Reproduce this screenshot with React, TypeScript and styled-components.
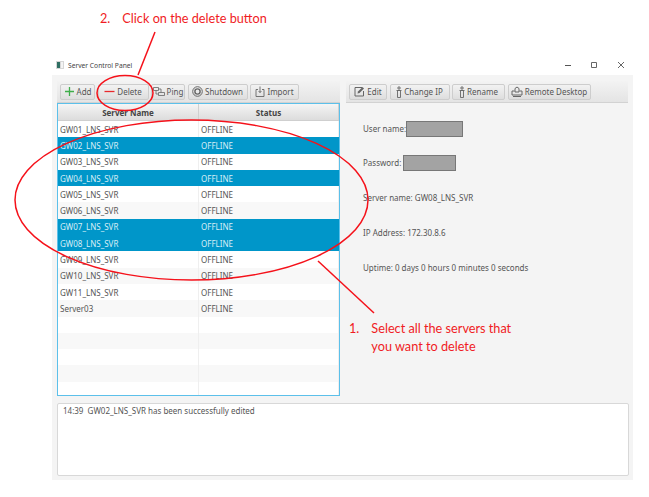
import * as React from 'react';
import styled, { createGlobalStyle } from 'styled-components';

const GlobalStyle = createGlobalStyle`
  html, body {
    margin: 0;
    padding: 0;
    background: #fff;
  }
`;

const Page = styled.div`
  position: relative;
  width: 649px;
  height: 497px;
  overflow: hidden;
  padding: 55px 0 0 52px;
  box-sizing: border-box;
  background: #fff;
  font-family: "Noto Sans", "Open Sans", sans-serif;
  font-size: 8px;
  color: #555;
`;

const Window = styled.div`
  width: 581px;
  height: 425px;
  display: flex;
  flex-direction: column;
`;

const TitleBar = styled.div`
  height: 20px;
  display: flex;
  align-items: center;
  padding: 0 0 0 4px;
  background: #fff;
  color: #444;
  font-size: 6.7px;
`;

const TitleText = styled.span`
  margin-left: 4px;
  flex: 1;
`;

const WindowButton = styled.div`
  width: 26.5px;
  height: 20px;
  display: flex;
  align-items: center;
  justify-content: center;
  position: relative;
  left: 1px;
`;

const Body = styled.div`
  flex: 1;
  display: flex;
  flex-direction: column;
  background: #f4f4f4;
  padding: 6px 4px 4px 5px;
`;

const Panes = styled.div`
  display: flex;
  gap: 6px;
`;

const LeftPane = styled.div`
  width: 283px;
  display: flex;
  flex-direction: column;
`;

const RightPane = styled.div`
  width: 282px;
  display: flex;
  flex-direction: column;
`;

const Toolbar = styled.div`
  height: 22px;
  display: flex;
  align-items: center;
  gap: 2.5px;
  padding-left: 3px;
  box-sizing: border-box;
  background: linear-gradient(#f3f3f3, #e4e4e4);
  border-bottom: 1px solid #d2d2d2;
`;

const ToolButton = styled.div<{ $width: number }>`
  width: ${({ $width }) => $width}px;
  height: 16px;
  display: flex;
  align-items: center;
  justify-content: center;
  gap: 2px;
  box-sizing: border-box;
  border: 1px solid #cdcdcd;
  border-radius: 2px;
  background: linear-gradient(#f2f2f2, #dedede);
  color: #555;
  white-space: nowrap;
`;

const Table = styled.div`
  height: 293px;
  box-sizing: border-box;
  border: 1px solid #5cc0ea;
  background: #fff;
  overflow: hidden;
`;

const HeaderRow = styled.div`
  height: 17px;
  display: grid;
  grid-template-columns: 141px 1fr;
  background: linear-gradient(#f5f5f5, #dcdcdc);
  border-bottom: 1px solid #cfcfcf;
  box-sizing: border-box;
`;

const HeaderCell = styled.div`
  display: flex;
  align-items: center;
  justify-content: center;
  font-weight: 700;
  color: #444;
  border-right: 1px solid #d0d0d0;
`;

const Row = styled.div<{ $selected: boolean; $odd: boolean }>`
  height: 16.3px;
  display: grid;
  grid-template-columns: 141px 1fr;
  background: ${({ $selected, $odd }) => ($selected ? '#0096c9' : $odd ? '#fff' : '#f8f8f8')};
  color: ${({ $selected }) => ($selected ? '#d8eef6' : '#555')};
`;

const Cell = styled.div<{ $selected: boolean }>`
  display: flex;
  align-items: center;
  padding-left: 2px;
  border-right: 1px solid ${({ $selected }) => ($selected ? 'transparent' : '#efefef')};
`;

const Details = styled.div`
  display: flex;
  flex-direction: column;
  padding: 8.5px 0 0 17px;
`;

const CredentialRow = styled.div<{ $gap: number }>`
  display: flex;
  align-items: center;
  gap: ${({ $gap }) => $gap}px;
  height: 34px;
`;

const HiddenValue = styled.div<{ $width: number }>`
  width: ${({ $width }) => $width}px;
  height: 16px;
  box-sizing: border-box;
  background: #a3a3a3;
  border: 1px solid #777;
`;

const InfoLine = styled.div`
  height: 35px;
  display: flex;
  align-items: center;
`;

const Log = styled.div`
  margin-top: 7px;
  width: 572px;
  height: 73px;
  box-sizing: border-box;
  padding: 1px 5px;
  background: #fff;
  border: 1px solid #d8d8d8;
  border-radius: 2px;
`;

const Drawing = styled.svg`
  position: absolute;
  left: 0;
  top: 0;
  pointer-events: none;
`;

const Note = styled.div<{ $left: number; $top: number }>`
  position: absolute;
  left: ${({ $left }) => $left}px;
  top: ${({ $top }) => $top}px;
  display: flex;
  gap: 12px;
  font-family: Lato, "Open Sans", sans-serif;
  font-size: 12.7px;
  line-height: 18px;
  color: #f01c24;
  white-space: nowrap;
`;

const Icon = styled.svg`
  flex: none;
  display: block;
`;

const stroke = { fill: 'none', stroke: '#666', strokeWidth: 1 };

const PlusIcon = () => (
  <Icon width="11" height="11" viewBox="0 0 11 11">
    <path d="M5.5 1v9M1 5.5h9" stroke="#3fae4a" strokeWidth="1.3" />
  </Icon>
);

const MinusIcon = () => (
  <Icon width="11" height="11" viewBox="0 0 11 11">
    <path d="M.5 5.5h10" stroke="#e8282c" strokeWidth="1.3" />
  </Icon>
);

const PingIcon = () => (
  <Icon width="12" height="11" viewBox="0 0 12 11">
    <path d="M.5 1.5h5v3h-5zM5.5 6.5h6v3h-6zM3 4.5v3.5h2.5M8 6.5V3H5.5" {...stroke} strokeWidth="0.8" />
  </Icon>
);

const ShutdownIcon = () => (
  <Icon width="11" height="11" viewBox="0 0 11 11">
    <circle cx="5.5" cy="5.5" r="4.8" {...stroke} />
    <circle cx="5.5" cy="5.5" r="2.6" {...stroke} strokeWidth="1.4" />
  </Icon>
);

const ImportIcon = () => (
  <Icon width="10" height="11" viewBox="0 0 10 11">
    <path d="M3 3.5H1v7h8v-7H7M5 .5v6M3.6 5 5 6.6 6.4 5" {...stroke} strokeWidth="0.9" />
  </Icon>
);

const EditIcon = () => (
  <Icon width="11" height="11" viewBox="0 0 11 11">
    <path d="M8 1.5H1v8.5h8.500V5" {...stroke} />
    <path d="M4 5.500 8.500 1l1.500 1.500L5.500 7 3.500 7.500z" fill="#666" />
  </Icon>
);

const TagIcon = () => (
  <Icon width="6" height="12" viewBox="0 0 6 12">
    <path d="M1.500 4.500h3v7h-3zM2 1h2v2H2zM.5 4.500h5" {...stroke} strokeWidth="0.9" />
  </Icon>
);

const DesktopIcon = () => (
  <Icon width="12" height="11" viewBox="0 0 12 11">
    <path d="M1 5h2.500M8.500 5H11v4H1V5M2 10.500h8" {...stroke} />
    <path d="M4 6V2.500L6 1l2 1.500V6z" {...stroke} />
  </Icon>
);

const AppIcon = () => (
  <Icon width="8" height="8" viewBox="0 0 8 8">
    <rect width="8" height="8" fill="#d6d6d6" />
    <rect x="1" y="1" width="3" height="6" fill="#2f6f63" />
    <rect x="5" y="1" width="2" height="6" fill="#f4f4f4" />
  </Icon>
);

const leftTools = [
  { label: 'Add', width: 35, icon: <PlusIcon /> },
  { label: 'Delete', width: 51, icon: <MinusIcon /> },
  { label: 'Ping', width: 34, icon: <PingIcon /> },
  { label: 'Shutdown', width: 60, icon: <ShutdownIcon /> },
  { label: 'Import', width: 49, icon: <ImportIcon /> },
];

const rightTools = [
  { label: 'Edit', width: 38, icon: <EditIcon /> },
  { label: 'Change IP', width: 60, icon: <TagIcon /> },
  { label: 'Rename', width: 53, icon: <TagIcon /> },
  { label: 'Remote Desktop', width: 83, icon: <DesktopIcon /> },
];

const servers = [
  'GW01_LNS_SVR', 'GW02_LNS_SVR', 'GW03_LNS_SVR', 'GW04_LNS_SVR', 'GW05_LNS_SVR', 'GW06_LNS_SVR',
  'GW07_LNS_SVR', 'GW08_LNS_SVR', 'GW09_LNS_SVR', 'GW10_LNS_SVR', 'GW11_LNS_SVR', 'Server03',
  '', '', '', '', '',
];

const selected = [1, 3, 6, 7];

const App = () => (
  <Page>
    <GlobalStyle />
    <Window>
      <TitleBar>
        <AppIcon />
        <TitleText>Server Control Panel</TitleText>
        <WindowButton>
          <Icon width="8" height="8" viewBox="0 0 8 8"><path d="M1 4.500h6" stroke="#555" /></Icon>
        </WindowButton>
        <WindowButton>
          <Icon width="8" height="8" viewBox="0 0 8 8"><path d="M1.500 1.500h5v5h-5z" {...stroke} /></Icon>
        </WindowButton>
        <WindowButton>
          <Icon width="8" height="8" viewBox="0 0 8 8"><path d="M1 1l6 6M7 1 1 7" {...stroke} /></Icon>
        </WindowButton>
      </TitleBar>
      <Body>
        <Panes>
          <LeftPane>
            <Toolbar>
              {leftTools.map((tool) => (
                <ToolButton key={tool.label} $width={tool.width}>
                  {tool.icon}
                  {tool.label}
                </ToolButton>
              ))}
            </Toolbar>
            <Table>
              <HeaderRow>
                <HeaderCell>Server Name</HeaderCell>
                <HeaderCell>Status</HeaderCell>
              </HeaderRow>
              {servers.map((name, index) => {
                const isSelected = selected.includes(index);
                return (
                  <Row key={`${name}-${index}`} $selected={isSelected} $odd={index % 2 === 0}>
                    <Cell $selected={isSelected}>{name}</Cell>
                    <Cell $selected={isSelected}>{name && 'OFFLINE'}</Cell>
                  </Row>
                );
              })}
            </Table>
          </LeftPane>
          <RightPane>
            <Toolbar>
              {rightTools.map((tool) => (
                <ToolButton key={tool.label} $width={tool.width}>
                  {tool.icon}
                  {tool.label}
                </ToolButton>
              ))}
            </Toolbar>
            <Details>
              <CredentialRow $gap={0}>
                User name: <HiddenValue $width={57} />
              </CredentialRow>
              <CredentialRow $gap={2}>
                Password: <HiddenValue $width={53} />
              </CredentialRow>
              <InfoLine>Server name: GW08_LNS_SVR</InfoLine>
              <InfoLine>IP Address: 172.30.8.6</InfoLine>
              <InfoLine>Uptime: 0 days 0 hours 0 minutes 0 seconds</InfoLine>
            </Details>
          </RightPane>
        </Panes>
        <Log>14:39&nbsp;&nbsp;GW02_LNS_SVR has been successfully edited</Log>
      </Body>
    </Window>
    <Drawing width="649" height="497" viewBox="0 0 649 497">
      <g fill="none" stroke="#f5111a" strokeWidth="1.5">
        <ellipse cx="125" cy="93" rx="28" ry="17.500" />
        <ellipse cx="191.500" cy="200" rx="176.500" ry="80" />
        <path d="M155 32 138 75" />
        <path d="M318 261 374 313" />
      </g>
    </Drawing>
    <Note $left={100} $top={9}>
      <span>2.</span>
      <span>Click on the delete button</span>
    </Note>
    <Note $left={349} $top={319}>
      <span>1.</span>
      <span>
        Select all the servers that
        <br />
        you want to delete
      </span>
    </Note>
  </Page>
);

export default App;
